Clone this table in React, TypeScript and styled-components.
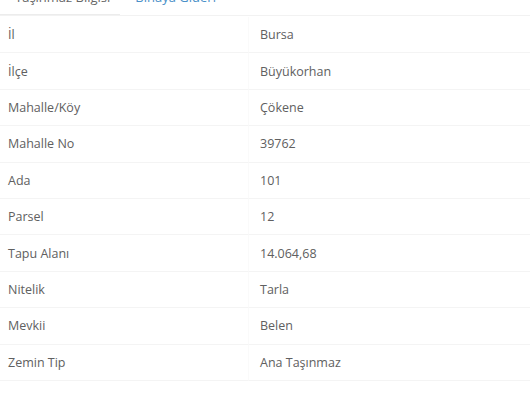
import styled, { createGlobalStyle } from "styled-components";

const GlobalStyle = createGlobalStyle`
  html, body {
    margin: 0;
    padding: 0;
    background: #ffffff;
  }
  body {
    font-family: "Open Sans", "Noto Sans", Arial, sans-serif;
  }
`

const Page = styled.div`
  width: 530px;
  overflow: hidden;
`

const Tabs = styled.div`
  display: flex;
  margin-top: -17px;
  height: 32px;
  border-bottom: 1px solid #f2f2f2;
`

const Tab = styled.div<{ $active?: boolean }>`
  padding: 5px 10px 0 15px;
  font-size: 13px;
  color: ${p => (p.$active ? "#666666" : "#4a90c8")};
  border-bottom: ${p => (p.$active ? "1px solid #ececec" : "none")};
`

const Table = styled.div`
  display: grid;
  grid-template-columns: 248px 1fr;
  margin-top: 1px;
`

const Cell = styled.div<{ $value?: boolean }>`
  height: 36.4px;
  box-sizing: border-box;
  display: flex;
  align-items: center;
  padding-left: ${p => (p.$value ? "11px" : "8px")};
  font-size: 12.5px;
  color: #606060;
  border-bottom: 1px solid #f4f4f4;
  border-left: ${p => (p.$value ? "1px solid #fafafa" : "none")};
`

const rows: [string, string][] = [
  ["İl", "Bursa"],
  ["İlçe", "Büyükorhan"],
  ["Mahalle/Köy", "Çökene"],
  ["Mahalle No", "39762"],
  ["Ada", "101"],
  ["Parsel", "12"],
  ["Tapu Alanı", "14.064,68"],
  ["Nitelik", "Tarla"],
  ["Mevkii", "Belen"],
  ["Zemin Tip", "Ana Taşınmaz"],
]

const App = () => {
  return (
    <>
      <GlobalStyle />
      <Page>
        <Tabs>
          <Tab $active>Taşınmaz Bilgisi</Tab>
          <Tab>Binaya Gideri</Tab>
        </Tabs>
        <Table>
          {rows.map(([label, value]) => (
            <>
              <Cell key={label}>{label}</Cell>
              <Cell key={label + "-v"} $value>{value}</Cell>
            </>
          ))}
        </Table>
      </Page>
    </>
  )
}

export default App
